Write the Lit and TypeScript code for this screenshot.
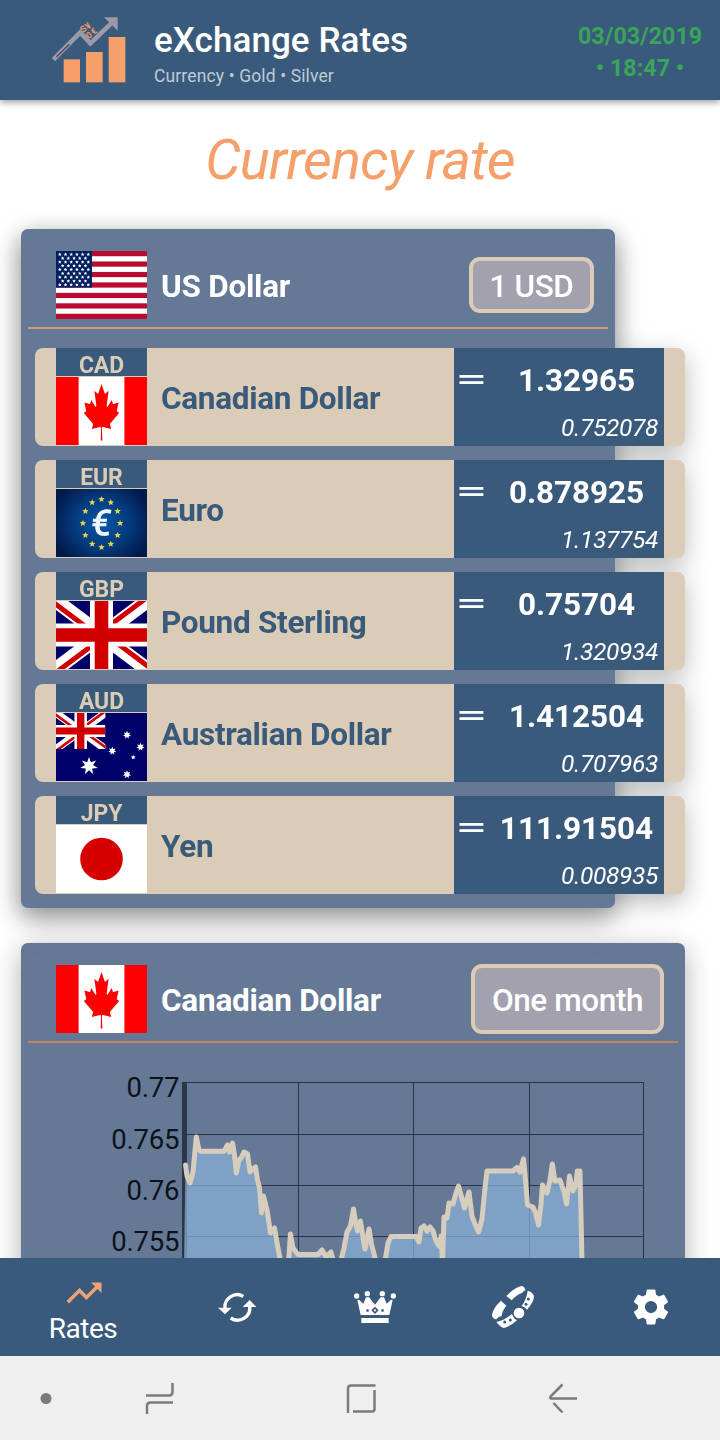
import { LitElement, html, css, svg } from "lit";
import { customElement, property } from "lit/decorators.js";

const star = (cx: number, cy: number, r: number, n: number, inner: number) => {
  const pts: string[] = [];
  for (let i = 0; i < n * 2; i++) {
    const a = (Math.PI * i) / n - Math.PI / 2;
    const q = i % 2 ? r * inner : r;
    pts.push(`${(cx + q * Math.cos(a)).toFixed(2)},${(cy + q * Math.sin(a)).toFixed(2)}`);
  }
  return pts.join(" ");
};

const union = svg`
  <rect width="91" height="68" fill="#00006b"/>
  <path d="M0 0L91 68M91 0L0 68" stroke="#fff" stroke-width="14.5"/>
  <path d="M-2 2L43.5 36M47.5 32L93 66" stroke="#d00000" stroke-width="5"/>
  <path d="M89 -2L43.5 32M47.5 36L2 70" stroke="#d00000" stroke-width="5"/>
  <path d="M45.5 0V68M0 34H91" stroke="#fff" stroke-width="23"/>
  <path d="M45.5 0V68M0 34H91" stroke="#d00000" stroke-width="13.6"/>`;

const usStars = Array.from({ length: 9 }, (_, r) =>
  Array.from({ length: r % 2 ? 5 : 6 }, (_, c) => ({
    x: 3.8 + c * 5.7 + (r % 2 ? 2.85 : 0),
    y: 3.4 + r * 3.8,
  }))
).flat();

const flags: Record<string, unknown> = {
  US: svg`
    <rect width="91" height="68" fill="#fff"/>
    ${[0, 1, 2, 3, 4, 5, 6].map((i) => svg`<rect y=${i * 10.46} width="91" height="5.23" fill="#b90a30"/>`)}
    <rect width="36" height="36.6" fill="#002060"/>
    ${usStars.map((s) => svg`<polygon points=${star(s.x, s.y, 1.85, 5, 0.5)} fill="#fff"/>`)}`,
  CAD: svg`
    <rect width="91" height="68" fill="#fff"/>
    <rect width="22.6" height="68" fill="#f00"/><rect x="68.4" width="22.6" height="68" fill="#f00"/>
    <path fill="#f00" transform="translate(-0.1 1.4) scale(.0095 .014)" d="m4890 4430-45-863a95 95 0 0 1 111-98l859 151-116-320a65 65 0 0 1 20-73l941-762-212-99a65 65 0 0 1-34-79l186-572-542 115a65 65 0 0 1-73-38l-105-247-423 454a65 65 0 0 1-111-57l204-1052-327 189a65 65 0 0 1-91-27l-332-652-332 652a65 65 0 0 1-91 27l-327-189 204 1052a65 65 0 0 1-111 57l-423-454-105 247a65 65 0 0 1-73 38l-542-115 186 572a65 65 0 0 1-34 79l-212 99 941 762a65 65 0 0 1 20 73l-116 320 859-151a95 95 0 0 1 111 98l-45 863z"/>`,
  EUR: svg`
    <defs><radialGradient id="eu"><stop offset="0" stop-color="#0858a6"/><stop offset=".55" stop-color="#043a7c"/><stop offset="1" stop-color="#02194a"/></radialGradient></defs>
    <rect width="91" height="68" fill="#02194a"/>
    <rect x="-6" y="-12" width="103" height="92" fill="url(#eu)"/>
    ${Array.from({ length: 12 }, (_, i) => {
      const a = (Math.PI * i) / 6;
      return svg`<polygon points=${star(45.5 + 18.6 * Math.sin(a), 34.3 - 24 * Math.cos(a), 3.4, 5, 0.45)} fill="#e3d34e"/>`;
    })}
    <text transform="translate(44.2 46.3) skewX(-6)" text-anchor="middle" font-family="Roboto, sans-serif" font-size="35" font-weight="400" fill="#f2f8ff" stroke="#f2f8ff" stroke-width="1">€</text>`,
  GBP: union,
  AUD: svg`
    <rect width="91" height="68" fill="#00006b"/>
    <svg width="49.4" height="36" viewBox="0 0 91 68" preserveAspectRatio="none">${union}</svg>
    <polygon points=${star(33, 53, 9, 7, 0.46)} fill="#fff"/>
    <polygon points=${star(71, 22, 4.2, 7, 0.5)} fill="#fff"/>
    <polygon points=${star(56.3, 38, 4.2, 7, 0.5)} fill="#fff"/>
    <polygon points=${star(84.5, 34, 4.2, 7, 0.5)} fill="#fff"/>
    <polygon points=${star(71, 61.5, 4.2, 7, 0.5)} fill="#fff"/>
    <polygon points=${star(77.2, 44.3, 2.4, 5, 0.5)} fill="#fff"/>`,
  JPY: svg`<rect width="91" height="68" fill="#fff"/><circle cx="45.5" cy="34" r="21.3" fill="#d60000"/>`,
};

@customElement("currency-flag")
class CurrencyFlag extends LitElement {
  @property() code = "US";
  static styles = css`
    :host { display: block; width: 91px; height: 68px; }
    svg { display: block; }
  `;
  render() {
    return html`<svg width="91" height="68" viewBox="0 0 91 68">${flags[this.code]}</svg>`;
  }
}

@customElement("rate-row")
class RateRow extends LitElement {
  @property() code = "";
  @property() name = "";
  @property() value = "";
  @property() inverse = "";
  static styles = css`
    :host { display: flex; width: 650px; height: 98px; border-radius: 8px; background: #dbccb7; box-sizing: border-box; padding: 0 21px; }
    .left { width: 91px; display: flex; flex-direction: column; }
    .code { height: 28px; margin-bottom: 1px; background: #3a5a7c; color: #dbccb7; font-weight: 700; font-size: 23px; letter-spacing: -.1px; line-height: 35px; text-align: center; }
    .name { flex: 1; padding: 3px 0 0 14px; display: flex; align-items: center; color: #3a5a7c; font-weight: 700; font-size: 31.5px; letter-spacing: -0.3px; white-space: nowrap; }
    .right { width: 210px; background: #3a5a7c; color: #fff; display: flex; flex-direction: column; }
    .top { display: flex; height: 64px; }
    .eq { width: 35px; font: 38px/63px "DejaVu Sans", sans-serif; text-align: center; transform: scaleY(.85); }
    .value { flex: 1; text-align: center; font-weight: 700; font-size: 31.5px; line-height: 65px; letter-spacing: -.05px; }
    .inverse { text-align: right; padding-right: 6px; font-style: italic; font-size: 24.5px; line-height: 32px; letter-spacing: -.35px; }
  `;
  render() {
    return html`
      <div class="left"><div class="code">${this.code}</div><currency-flag code=${this.code}></currency-flag></div>
      <div class="name">${this.name}</div>
      <div class="right">
        <div class="top"><span class="eq">=</span><span class="value">${this.value}</span></div>
        <div class="inverse">${this.inverse}</div>
      </div>`;
  }
}

const line =
  "185.5,1165 187,1176 190,1183 193,1172 196.3,1137 199,1150 201,1151.3 224,1151.3 227.5,1145 229.5,1152 232.5,1143 234.5,1155 236.3,1173 239,1160 241,1158 244,1152 247.5,1154 250,1172 252.5,1169 255.5,1167 257.5,1180 259.5,1188 261.5,1213 263.5,1196 267,1210 270.5,1233 274.5,1228 276.5,1240 281,1264 288.5,1264 290.4,1234 293,1248 298,1254.5 318,1254.5 322,1250 326,1257 331,1252 334,1264 340,1264 344,1248 347,1232 350.5,1226 353.5,1209 355.5,1222 357.5,1231 360.5,1221 363,1238 365,1249 369,1229 371.5,1244 376.5,1264 384.5,1264 388,1243 391,1236.5 416,1236.5 419,1242 421,1228 424,1226 427,1231 430,1227 433,1231 436,1241 439,1246 441,1236 442.5,1262 444,1217 447,1218 449,1203 453,1204 456,1193 458.5,1186 461,1195 464.5,1208 469,1192 472,1216 475,1224 478.5,1232 482,1219 485,1188 487,1171 513,1171 517,1167.5 520,1172 523.5,1159 525.5,1180 527.5,1205 533,1207 536,1214 538.5,1225 541,1204 542.5,1185 547,1193 550,1180 552.3,1164 555,1181 560,1180 564,1192 566.5,1204 569.5,1176 573,1191 576,1185 577.3,1171 580,1171 582,1262";

const trend = svg`<path d="M16,6L18.29,8.29L13.41,13.17L9.41,9.17L2,16.59L3.41,18L9.41,12L13.41,16L19.71,9.71L22,12V6H16Z"/>`;
const cog = svg`<path d="M12,15.5A3.5,3.5 0 0,1 8.5,12A3.5,3.5 0 0,1 12,8.5A3.5,3.5 0 0,1 15.5,12A3.5,3.5 0 0,1 12,15.5M19.43,12.97C19.47,12.65 19.5,12.33 19.5,12C19.5,11.67 19.47,11.34 19.43,11L21.54,9.37C21.73,9.22 21.78,8.95 21.66,8.73L19.66,5.27C19.54,5.05 19.27,4.96 19.05,5.05L16.56,6.05C16.04,5.66 15.5,5.32 14.87,5.07L14.5,2.42C14.46,2.18 14.25,2 14,2H10C9.75,2 9.54,2.18 9.5,2.42L9.13,5.07C8.5,5.32 7.96,5.66 7.44,6.05L4.95,5.05C4.73,4.96 4.46,5.05 4.34,5.27L2.34,8.73C2.21,8.95 2.27,9.22 2.46,9.37L4.57,11C4.53,11.34 4.5,11.67 4.5,12C4.5,12.33 4.53,12.65 4.57,12.97L2.46,14.63C2.27,14.78 2.21,15.05 2.34,15.27L4.34,18.73C4.46,18.95 4.73,19.03 4.95,18.95L7.44,17.94C7.96,18.34 8.5,18.68 9.13,18.93L9.5,21.58C9.54,21.82 9.75,22 10,22H14C14.25,22 14.46,21.82 14.5,21.58L14.87,18.93C15.5,18.67 16.04,18.34 16.56,17.94L19.05,18.95C19.27,19.03 19.54,18.95 19.66,18.73L21.66,15.27C21.78,15.05 21.73,14.78 21.54,14.63L19.43,12.97Z"/>`;

@customElement("app-root")
class AppRoot extends LitElement {
  static styles = css`
    :host { display: flex; flex-direction: column; width: 720px; height: 1440px; overflow: hidden; background: #fff; font-family: Roboto, sans-serif; }
    svg { display: block; }
    header { height: 100px; background: #3a5a7c; display: flex; position: relative; z-index: 2; box-shadow: 0 2px 7px rgba(0,0,0,.42); }
    .logo { margin: 14px 0 0 49px; width: 105px; height: 72px; }
    .titles { flex: 1; padding-top: 18px; }
    .title { color: #fff; font-weight: 500; font-size: 35px; line-height: 46px; letter-spacing: .08px; white-space: nowrap; }
    .sub { color: #becad8; font-size: 17.5px; line-height: 24px; letter-spacing: .13px; }
    .date { color: #3aa45a; font-weight: 700; font-size: 23.3px; line-height: 32px; text-align: center; width: 124px; margin: 20px 18px 0 0; white-space: nowrap; }
    main { flex: 1; min-height: 0; overflow: hidden; padding: 0 21px; }
    h1 { margin: 0; padding-top: 24px; height: 129px; box-sizing: border-box; color: #f5a06a; font-style: italic; font-weight: 400; font-size: 56px; line-height: 72px; text-align: center; letter-spacing: -.95px; }
    .card { background: #657996; border-radius: 7px; box-sizing: border-box; }
    .rates { width: 594px; height: 679px; box-shadow: 0 8px 26px rgba(0,0,0,.25); filter: drop-shadow(0 8px 13px rgba(0,0,0,.27)); }
    .graph { width: 664px; height: 600px; margin-top: 35px; box-shadow: 0 7px 28px rgba(0,0,0,.32); }
    .head { height: 84px; margin: 0 7px; padding: 14px 14px 0 28px; display: flex; align-items: center; border-bottom: 2px solid #cb9c84; }
    .graph .head { border-bottom-color: #c48658; }
    .head-name { flex: 1; padding: 3px 0 0 14px; color: #fff; font-weight: 700; font-size: 31.5px; letter-spacing: -0.25px; }
    .pill { box-sizing: border-box; border: 4px solid #dbccb7; border-radius: 11px; background: #a4a1af; color: #fff; font-weight: 500; font-size: 31.5px; text-align: center; letter-spacing: -.4px; white-space: nowrap; }
    .unit { width: 125px; height: 56px; line-height: 51px; }
    .period { width: 193px; height: 70px; line-height: 65px; }
    .rows { display: flex; flex-direction: column; gap: 14px; padding: 19px 0 0 14px; }
    .chart-text { font: 27.5px Roboto, sans-serif; letter-spacing: -.2px; fill: #0d1219; text-anchor: end; }
    nav { height: 98px; background: #3a5a7c; display: flex; position: relative; z-index: 2; }
    .tab { width: 138px; display: flex; flex-direction: column; align-items: center; justify-content: center; color: #fff; fill: #fff; }
    .tab.first { width: 168px; justify-content: flex-start; padding: 14px 0 0; box-sizing: border-box; }
    .tab.first svg { fill: #f0a077; }
    .label { font-size: 28px; line-height: 29px; letter-spacing: -.5px; padding-right: 2px; }
    footer { height: 84px; background: #efefef; display: flex; align-items: center; }
    footer div { display: flex; justify-content: center; }
    .k1 { width: 91px; } .k2 { width: 138px; } .k3 { width: 263px; } .k4 { width: 142px; }
    footer svg { fill: none; stroke: #7b7b7b; stroke-width: 2.5; }
  `;

  rates = [
    ["CAD", "Canadian Dollar", "1.32965", "0.752078"],
    ["EUR", "Euro", "0.878925", "1.137754"],
    ["GBP", "Pound Sterling", "0.75704", "1.320934"],
    ["AUD", "Australian Dollar", "1.412504", "0.707963"],
    ["JPY", "Yen", "111.91504", "0.008935"],
  ];

  render() {
    return html`
      <header>
        <svg class="logo" width="105" height="72" viewBox="147 42 315 216">
          <g fill="#f5a06a"><rect x="191" y="178" width="49" height="69"/><rect x="258" y="156" width="50" height="91"/><rect x="326" y="111" width="50" height="136"/></g>
          <path d="M160 179L241 97L271 130L336 68" fill="none" stroke="#9b9aac" stroke-width="14"/>
          <path d="M312 52H353V92Z" fill="#9b9aac"/>
          <path d="M169 171L208 133" stroke="#4c4c5c" stroke-width="4"/>
          <g fill="#e79a70" font-family="Roboto, sans-serif" font-weight="700" font-size="27">
            <text transform="translate(250 99) rotate(-42)">S</text><text transform="translate(265 89) rotate(-42)">¥</text>
            <text transform="translate(267 118) rotate(-42)">0</text><text transform="translate(282 106) rotate(-42)">€</text>
          </g>
        </svg>
        <div class="titles"><div class="title">eXchange Rates</div><div class="sub">Currency • Gold • Silver</div></div>
        <div class="date">03/03/2019<br>• 18:47 •</div>
      </header>
      <main>
        <h1>Currency rate</h1>
        <section class="card rates">
          <div class="head"><currency-flag code="US"></currency-flag><span class="head-name">US Dollar</span><span class="pill unit">1 USD</span></div>
          <div class="rows">
            ${this.rates.map(([c, n, v, i]) => html`<rate-row code=${c} name=${n} value=${v} inverse=${i}></rate-row>`)}
          </div>
        </section>
        <section class="card graph">
          <div class="head"><currency-flag code="CAD"></currency-flag><span class="head-name">Canadian Dollar</span><span class="pill period">One month</span></div>
          <svg width="664" height="215" viewBox="21 1043 664 215">
            <path d="M184 1082.5H644M184 1134.5H644M184 1185.5H644M184 1236.5H644M298.5 1082V1258M413.5 1082V1258M529.5 1082V1258M643.5 1082V1258" stroke="#2a3443" stroke-width="1"/>
            <rect x="182" y="1082" width="5" height="176" fill="#2c3746"/>
            <polygon points="184,1264 ${line}" fill="#8ab0d8" fill-opacity=".72"/>
            <polyline points=${line} fill="none" stroke="#d7cdbd" stroke-width="5" stroke-linejoin="round" stroke-linecap="round"/>
            <text class="chart-text" x="179.3" y="1097">0.77</text>
            <text class="chart-text" x="179.3" y="1149">0.765</text>
            <text class="chart-text" x="179.3" y="1200">0.76</text>
            <text class="chart-text" x="179.3" y="1251">0.755</text>
          </svg>
        </section>
      </main>
      <nav>
        <div class="tab first"><svg width="42" height="42" viewBox="0 0 24 24">${trend}</svg><span class="label">Rates</span></div>
        <div class="tab">
          <svg width="42" height="42" viewBox="648 108 126 126">
            <path d="M675 176A37 37 0 0 1 730 139M749 167A37 37 0 0 1 692 204" fill="none" stroke="#fff" stroke-width="10"/>
            <path d="M654 173H695L675 193ZM728 171H769L749 150Z"/>
          </svg>
        </div>
        <div class="tab">
          <svg width="46" height="42" viewBox="-24 108 138 126">
            <circle cx="-10" cy="138" r="8"/><circle cx="22" cy="131" r="8"/><circle cx="67" cy="131" r="8"/><circle cx="100" cy="138" r="8"/>
            <path d="M2 195L-8 150L-3 149L10 161L18 142H27L45 164L62 142H72L80 161L93 149L98 150L88 195Z"/><path d="M4 204H86V219H4Z"/>
            <path d="M45 170L56 181L45 192L34 181Z" fill="#3a5a7c"/><path d="M45 177L49 181L45 185L41 181Z"/>
            <path d="M19 178h7v7h-7zM64 178h7v7h-7z" fill="#3a5a7c"/>
          </svg>
        </div>
        <div class="tab">
          <svg width="46" height="46" viewBox="390 102 138 138">
            <path d="M439 138Q466 110 486 108Q494 110 496 121Q489 124 486 129Q470 134 455 151Z"/>
            <path d="M423 152L439 167Q426 183 425 198Q415 199 409 208Q397 207 396 196Q398 175 423 152Z"/>
            <path d="M503 122Q521 127 522 141Q520 158 501 179Q496 171 485 168Q500 147 503 122Z"/>
            <path d="M409 216Q437 209 456 192Q461 206 471 211Q450 230 432 234Q422 233 409 216Z"/>
            <circle cx="477" cy="189" r="16"/>
            <g fill="#3a5a7c"><circle cx="505" cy="147" r="4.5"/><circle cx="498" cy="163" r="4.5"/><circle cx="451" cy="210" r="4.5"/><circle cx="434" cy="216" r="4.5"/></g>
          </svg>
        </div>
        <div class="tab"><svg width="42" height="42" viewBox="0 0 24 24">${cog}</svg></div>
      </nav>
      <footer>
        <div class="k1"><svg width="12" height="12"><circle cx="6" cy="6.5" r="5.5" fill="#7b7b7b" stroke="none"/></svg></div>
        <div class="k2"><svg width="30" height="34"><path d="M1 14.5H24Q27.5 14.5 27.5 11V2M28 21.5H5.500Q2 21.500 2 25V33"/></svg></div>
        <div class="k3"><svg width="32" height="30"><path d="M3 30V5.500Q3 2.500 6 2.500H30.500M29.500 7V26Q29.500 28.500 27 28.500H8"/></svg></div>
        <div class="k4"><svg width="30" height="31"><path d="M29 15.500H3Q1.500 15 3 13L14.500 1.500M5.500 20L14.500 29.500"/></svg></div>
      </footer>
    `;
  }
}
